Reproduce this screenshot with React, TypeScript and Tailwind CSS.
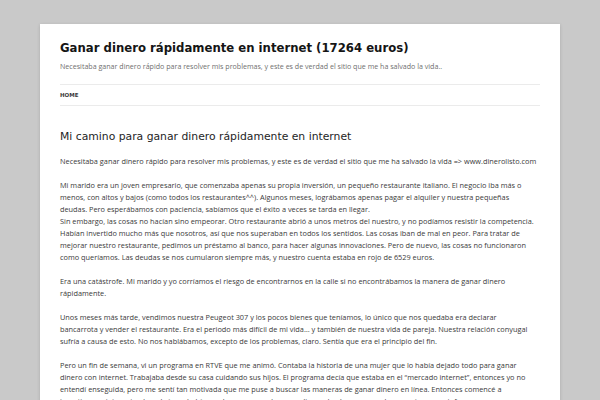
const body = "font-['Open_Sans',sans-serif]";

// Lines kept as in the reference so the wrapping matches
const paragraphs: string[][] = [
  [
    "Necesitaba ganar dinero rápido para resolver mis problemas, y este es de verdad el sitio que me ha salvado la vida => www.dinerolisto.com",
  ],
  [
    "Mi marido era un joven empresario, que comenzaba apenas su propia inversión, un pequeño restaurante italiano. El negocio iba más o",
    "menos, con altos y bajos (como todos los restaurantes^^). Algunos meses, lográbamos apenas pagar el alquiler y nuestra pequeñas",
    "deudas. Pero esperábamos con paciencia, sabíamos que el éxito a veces se tarda en llegar.",
    "Sin embargo, las cosas no hacían sino empeorar. Otro restaurante abrió a unos metros del nuestro, y no podíamos resistir la competencia.",
    "Habían invertido mucho más que nosotros, así que nos superaban en todos los sentidos. Las cosas iban de mal en peor. Para tratar de",
    "mejorar nuestro restaurante, pedimos un préstamo al banco, para hacer algunas innovaciones. Pero de nuevo, las cosas no funcionaron",
    "como queríamos. Las deudas se nos cumularon siempre más, y nuestro cuenta estaba en rojo de 6529 euros.",
  ],
  [
    "Era una catástrofe. Mi marido y yo corríamos el riesgo de encontrarnos en la calle si no encontrábamos la manera de ganar dinero",
    "rápidamente.",
  ],
  [
    "Unos meses más tarde, vendimos nuestra Peugeot 307 y los pocos bienes que teníamos, lo único que nos quedaba era declarar",
    "bancarrota y vender el restaurante. Era el periodo más difícil de mi vida… y también de nuestra vida de pareja. Nuestra relación conyugal",
    "sufría a causa de esto. No nos hablábamos, excepto de los problemas, claro. Sentía que era el principio del fin.",
  ],
  [
    "Pero un fin de semana, vi un programa en RTVE que me animó. Contaba la historia de una mujer que lo había dejado todo para ganar",
    "dinero con internet. Trabajaba desde su casa cuidando sus hijos. El programa decía que estaba en el “mercado internet”, entonces yo no",
    "entendí enseguida, pero me sentí tan motivada que me puse a buscar las maneras de ganar dinero en línea. Entonces comencé a",
    "investigar en internet y descubrí que había muchas maneras de ganar dinero desde casa, pero la mayoría eran estafas.",
  ],
];

export default function App() {
  return (
    <div className="h-[400px] overflow-hidden bg-[#c9c9c9] pt-6">
      <div className="mx-auto w-[520px] bg-white px-5 pt-3 pb-10 shadow-[0_1px_3px_rgba(100,100,100,0.3)]">
        {/* Header */}
        <header>
          <h1 className="font-['DejaVu_Sans',sans-serif] text-[11.7px] leading-[24px] font-bold text-[#151515]">
            Ganar dinero rápidamente en internet (17264 euros)
          </h1>
          <h2 className={`${body} text-[7.1px] leading-[12px] text-[#6f6f6f]`}>
            Necesitaba ganar dinero rápido para resolver mis problemas, y este es de verdad el sitio que me ha salvado la vida..
          </h2>
          <nav className="mt-3 flex h-[22px] items-center border-y border-[#ebebeb]">
            <a className="font-['DejaVu_Sans',sans-serif] text-[5.5px] font-bold uppercase text-[#3a3a3a]">Home</a>
          </nav>
        </header>

        {/* Post */}
        <article className="mt-[25px]">
          <h1 className="font-['DejaVu_Sans',sans-serif] text-[10.8px] leading-[12px] text-[#1e1e1e]">
            Mi camino para ganar dinero rápidamente en internet
          </h1>
          <div className={`${body} mt-3 text-[7.35px] leading-[12px] text-[#3a3a3a]`}>
            {paragraphs.map((lines, i) => (
              <p key={i} className="mb-3">
                {lines.map((line, j) => (
                  <span key={j} className="block whitespace-nowrap">
                    {line}
                  </span>
                ))}
              </p>
            ))}
          </div>
        </article>
      </div>
    </div>
  );
}
